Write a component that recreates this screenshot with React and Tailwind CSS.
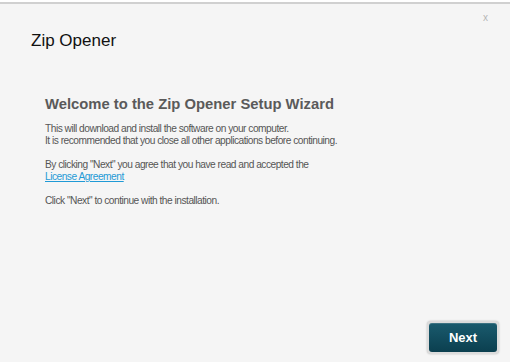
import React from 'react';

export default function App() {
  return (
    <div className="w-[510px] h-[362px] bg-[#f5f5f5] flex flex-col overflow-hidden" style={{ fontFamily: '"Liberation Sans", Arial, sans-serif' }}>
      <div className="h-[2px] bg-white" />
      <div className="h-[2px] bg-[#d0d0d0]" />
      <div className="flex justify-end pr-[22px] pt-[8px] h-[20px]">
        <button className="text-[10px] leading-none text-[#b5b5b5]">x</button>
      </div>
      <h1 className="pl-[31px] pt-[7px] text-[17px] leading-[20px] text-[#111]">Zip Opener</h1>
      <div className="pl-[45px] pt-[44px] flex-1 text-[#555]">
        <h2 className="text-[14.8px] leading-[18px] font-bold text-[#5a5a5a]">Welcome to the Zip Opener Setup Wizard</h2>
        <div className="mt-[10px] text-[10.2px] leading-[12px] tracking-[-0.5px]">
          <p>This will download and install the software on your computer.</p>
          <p>It is recommended that you close all other applications before continuing.</p>
          <p className="mt-[12px]">By clicking "Next" you agree that you have read and accepted the</p>
          <p><a href="#" className="text-[#1f9ad6] underline">License Agreement</a></p>
          <p className="mt-[12px]">Click "Next" to continue with the installation.</p>
        </div>
      </div>
      <div className="flex justify-end pr-[11px] pb-[8px]">
        <div className="p-[2px] rounded-[4px] bg-[#dcdcdc] shadow-[0_0_2px_rgba(0,0,0,0.25)]">
          <button className="w-[68px] h-[29px] rounded-[3px] bg-gradient-to-b from-[#1a5b6e] to-[#0b3f4f] text-white text-[13px] font-bold shadow-[inset_0_1px_0_rgba(255,255,255,0.15)]">
            Next
          </button>
        </div>
      </div>
    </div>
  );
}
